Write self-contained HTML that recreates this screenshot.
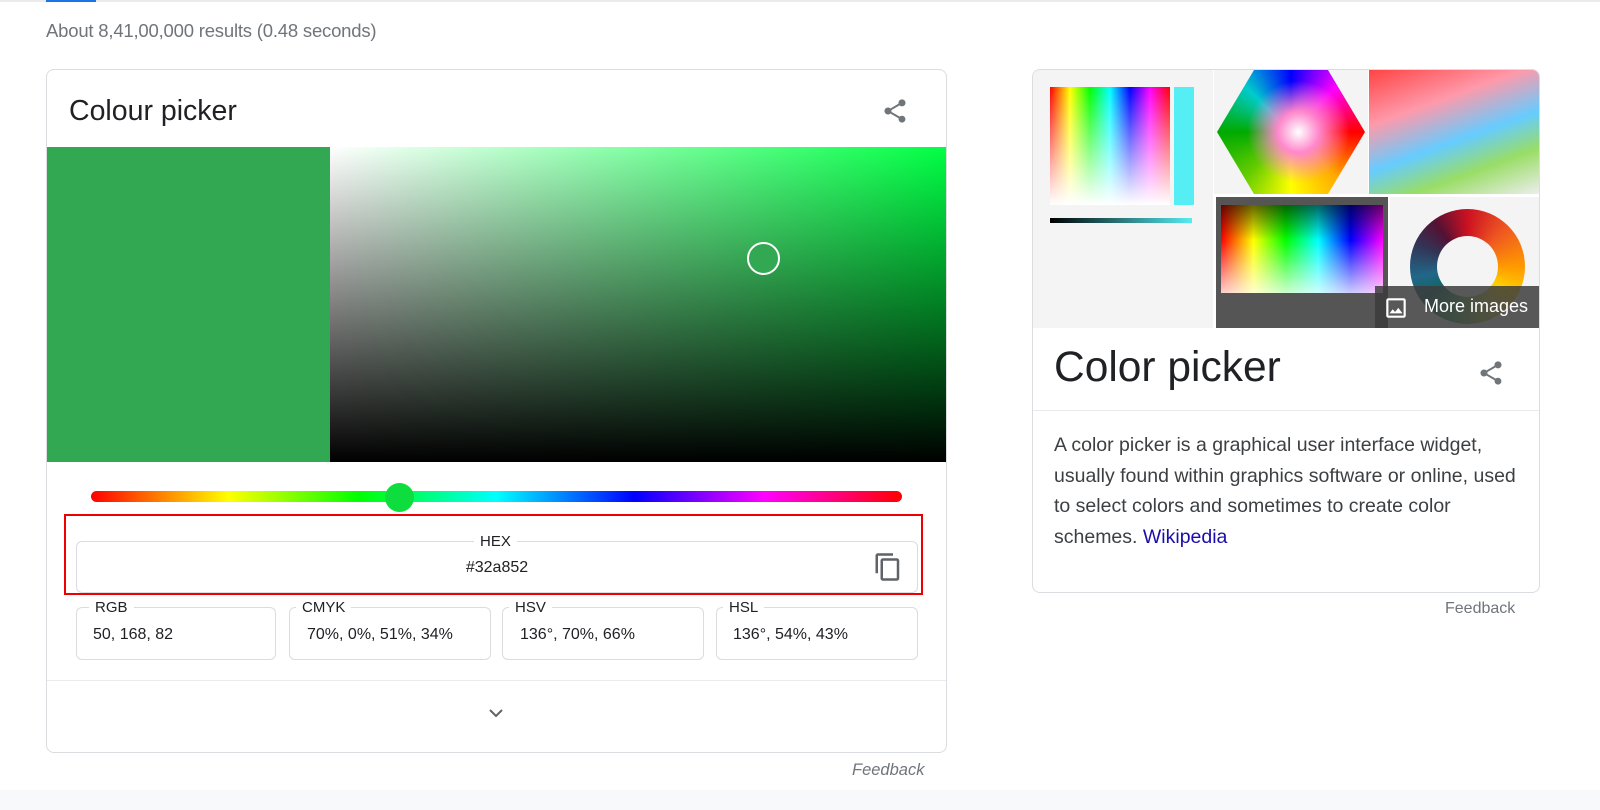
<!DOCTYPE html>
<html><head><style>
*{box-sizing:border-box;margin:0;padding:0}
body{width:1600px;height:810px;background:#fff;font-family:"Liberation Sans",Arial,sans-serif;position:relative;overflow:hidden;color:#202124}
.abs{position:absolute}
.box{position:absolute;border:1px solid #dadce0;border-radius:6px}
.lbl{position:absolute;top:-9px;background:#fff;padding:0 6px;font-size:15px;color:#202124}
.val{position:absolute;top:18px;font-size:16px;color:#202124}
</style></head><body>
<div class="abs" style="left:0;top:0;width:1600px;height:2px;background:#ebebeb"></div>
<div class="abs" style="left:46px;top:0;width:50px;height:2px;background:#1a73e8"></div>
<div class="abs" style="left:46px;top:20px;font-size:18.5px;color:#70757a;letter-spacing:-0.2px">About 8,41,00,000 results (0.48 seconds)</div>

<div class="abs" style="left:46px;top:69px;width:901px;height:684px;border:1px solid #dadce0;border-radius:8px;overflow:hidden">
  <div class="abs" style="left:22px;top:25px;font-size:28.5px;color:#202124">Colour picker</div>
  <svg class="abs" style="left:834px;top:26px" width="28" height="30" viewBox="0 0 24 24"><path fill="#70757a" d="M18 16.08c-.76 0-1.44.3-1.96.77L8.91 12.7c.05-.23.09-.46.09-.7s-.04-.47-.09-.7l7.05-4.11c.54.5 1.25.81 2.04.81 1.66 0 3-1.34 3-3s-1.34-3-3-3-3 1.34-3 3c0 .24.04.47.09.7L8.040 9.81C7.5 9.31 6.79 9 6 9c-1.66 0-3 1.34-3 3s1.34 3 3 3c.79 0 1.5-.31 2.04-.81l7.12 4.16c-.05.21-.08.43-.08.65 0 1.61 1.31 2.92 2.92 2.92s2.92-1.31 2.92-2.92-1.31-2.92-2.92-2.92z"/></svg>
  <div class="abs" style="left:0;top:77px;width:283px;height:315px;background:#32a852"></div>
  <div class="abs" style="left:283px;top:77px;width:617px;height:315px;background:linear-gradient(to bottom,rgba(0,0,0,0),#000),linear-gradient(to right,#fff,#00ff44)"></div>
  <div class="abs" style="left:700px;top:172px;width:33px;height:33px;border:2px solid #fff;border-radius:50%;background:#32a852"></div>
  <div class="abs" style="left:44px;top:421px;width:811px;height:11px;border-radius:6px;background:linear-gradient(to right,#f00,#ff0 17%,#0f0 33%,#0ff 50%,#00f 67%,#f0f 83%,#f00)"></div>
  <div class="abs" style="left:338px;top:413px;width:29px;height:29px;border-radius:50%;background:#0dde3e"></div>
  <div class="abs" style="left:17px;top:444px;width:859px;height:81px;border:2px solid #e00"></div>
  <div class="box" style="left:29px;top:471px;width:842px;height:52px">
    <div class="lbl" style="left:397px">HEX</div>
    <div class="val" style="left:0;width:100%;text-align:center;top:17px">#32a852</div>
    <svg class="abs" style="left:796px;top:10px" width="30" height="30" viewBox="0 0 24 24"><path fill="#5f6368" d="M16 1H4c-1.1 0-2 .9-2 2v14h2V3h12V1zm3 4H8c-1.1 0-2 .9-2 2v14c0 1.1.9 2 2 2h11c1.1 0 2-.9 2-2V7c0-1.1-.9-2-2-2zm0 16H8V7h11v14z"/></svg>
  </div>
  <div class="box" style="left:29px;top:537px;width:200px;height:53px"><div class="lbl" style="left:12px">RGB</div><div class="val" style="left:16px">50, 168, 82</div></div>
  <div class="box" style="left:242px;top:537px;width:202px;height:53px"><div class="lbl" style="left:6px">CMYK</div><div class="val" style="left:17px">70%, 0%, 51%, 34%</div></div>
  <div class="box" style="left:455px;top:537px;width:202px;height:53px"><div class="lbl" style="left:6px">HSV</div><div class="val" style="left:17px">136°, 70%, 66%</div></div>
  <div class="box" style="left:669px;top:537px;width:202px;height:53px"><div class="lbl" style="left:6px">HSL</div><div class="val" style="left:16px">136°, 54%, 43%</div></div>
  <div class="abs" style="left:0;top:610px;width:900px;height:1px;background:#e8eaed"></div>
  <svg class="abs" style="left:440px;top:637px" width="18" height="12" viewBox="0 0 18 12"><path d="M3 3l6 6 6-6" stroke="#5f6368" stroke-width="2" fill="none"/></svg>
</div>
<div class="abs" style="left:852px;top:761px;font-size:16.5px;font-style:italic;color:#70757a">Feedback</div>
<div class="abs" style="left:0;top:790px;width:1600px;height:20px;background:#f8f9fa"></div>

<div class="abs" style="left:1032px;top:69px;width:508px;height:524px;border:1px solid #dadce0;border-radius:8px;overflow:hidden">
  <div class="abs" style="left:0;top:0;width:180px;height:258px;background:#f4f4f4">
    <div class="abs" style="left:17px;top:17px;width:120px;height:118px;background:linear-gradient(to bottom,rgba(255,255,255,0),#fff),linear-gradient(to right,#f00,#ff0,#0f0,#0ff,#00f,#f0f,#f00)"></div>
    <div class="abs" style="left:141px;top:17px;width:20px;height:118px;background:#55eef4"></div>
    <div class="abs" style="left:17px;top:148px;width:142px;height:5px;background:linear-gradient(to right,#000,#55eef4)"></div>
  </div>
  <div class="abs" style="left:181px;top:0;width:154px;height:124px;background:#f4f4f4"><div class="abs" style="left:3px;top:0;width:148px;height:124px;clip-path:polygon(25% 0,75% 0,100% 50%,75% 100%,25% 100%,0 50%);background:radial-gradient(circle at 55% 50%,#fff 0,#f8c 20%,transparent 50%),conic-gradient(from 0deg,#00f,#f0f,#f00,#fa0,#ff0,#6c0,#0a0,#0cc,#00f)"></div></div>
  <div class="abs" style="left:336px;top:0;width:172px;height:124px;background:linear-gradient(160deg,#f44 0%,#f9a 30%,#6cf 55%,#9d6 75%,#eee 100%)"></div>
  <div class="abs" style="left:183px;top:127px;width:172px;height:131px;background:#555"><div class="abs" style="left:5px;top:8px;width:162px;height:88px;background:linear-gradient(to bottom,rgba(0,0,0,.6),rgba(0,0,0,0) 40%,rgba(255,255,255,.8)),linear-gradient(to right,#f00,#ff0,#0f0,#0ff,#00f,#f0f)"></div></div>
  <div class="abs" style="left:357px;top:127px;width:151px;height:131px;background:#f4f4f4"><div class="abs" style="left:20px;top:12px;width:115px;height:115px;border-radius:50%;background:conic-gradient(#c12 0,#e52 12%,#f90 25%,#fc0 33%,#dc4 40%,#4a6 55%,#166 65%,#268 72%,#335 82%,#513 90%,#c12)"></div><div class="abs" style="left:47px;top:39px;width:61px;height:61px;border-radius:50%;background:#f4f4f4"></div></div>
  <div class="abs" style="left:342px;top:216px;width:166px;height:42px;background:rgba(60,60,60,.85);color:#fff;font-size:18px">
    <svg class="abs" style="left:8px;top:9px" width="26" height="26" viewBox="0 0 24 24"><path fill="#fff" d="M19 5v14H5V5h14m0-2H5c-1.1 0-2 .9-2 2v14c0 1.1.9 2 2 2h14c1.1 0 2-.9 2-2V5c0-1.1-.9-2-2-2zm-4.86 8.860l-3 3.87L9 13.14 6 17h12l-3.86-5.14z"/></svg>
    <div class="abs" style="left:49px;top:10px">More images</div>
  </div>
  <div class="abs" style="left:21px;top:274px;font-size:42.5px;color:#202124">Color picker</div>
  <svg class="abs" style="left:444px;top:288px" width="28" height="30" viewBox="0 0 24 24"><path fill="#70757a" d="M18 16.08c-.76 0-1.44.3-1.96.77L8.91 12.7c.05-.23.09-.46.09-.7s-.04-.47-.09-.7l7.05-4.11c.54.5 1.25.81 2.04.81 1.66 0 3-1.34 3-3s-1.34-3-3-3-3 1.34-3 3c0 .24.04.47.09.7L8.04 9.81C7.5 9.31 6.79 9 6 9c-1.66 0-3 1.34-3 3s1.34 3 3 3c.79 0 1.5-.31 2.04-.81l7.12 4.16c-.05.21-.08.43-.08.65 0 1.61 1.31 2.92 2.92 2.92s2.92-1.31 2.92-2.92-1.31-2.92-2.92-2.92z"/></svg>
  <div class="abs" style="left:0;top:340px;width:508px;height:1px;background:#e8eaed"></div>
  <div class="abs" style="left:21px;top:360px;width:475px;font-size:19.5px;line-height:30.5px;color:#3c4043">A color picker is a graphical user interface widget, usually found within graphics software or online, used to select colors and sometimes to create color schemes. <span style="color:#1a0dab">Wikipedia</span></div>
</div>
<div class="abs" style="left:1445px;top:600px;font-size:16px;color:#70757a">Feedback</div>
</body></html>
